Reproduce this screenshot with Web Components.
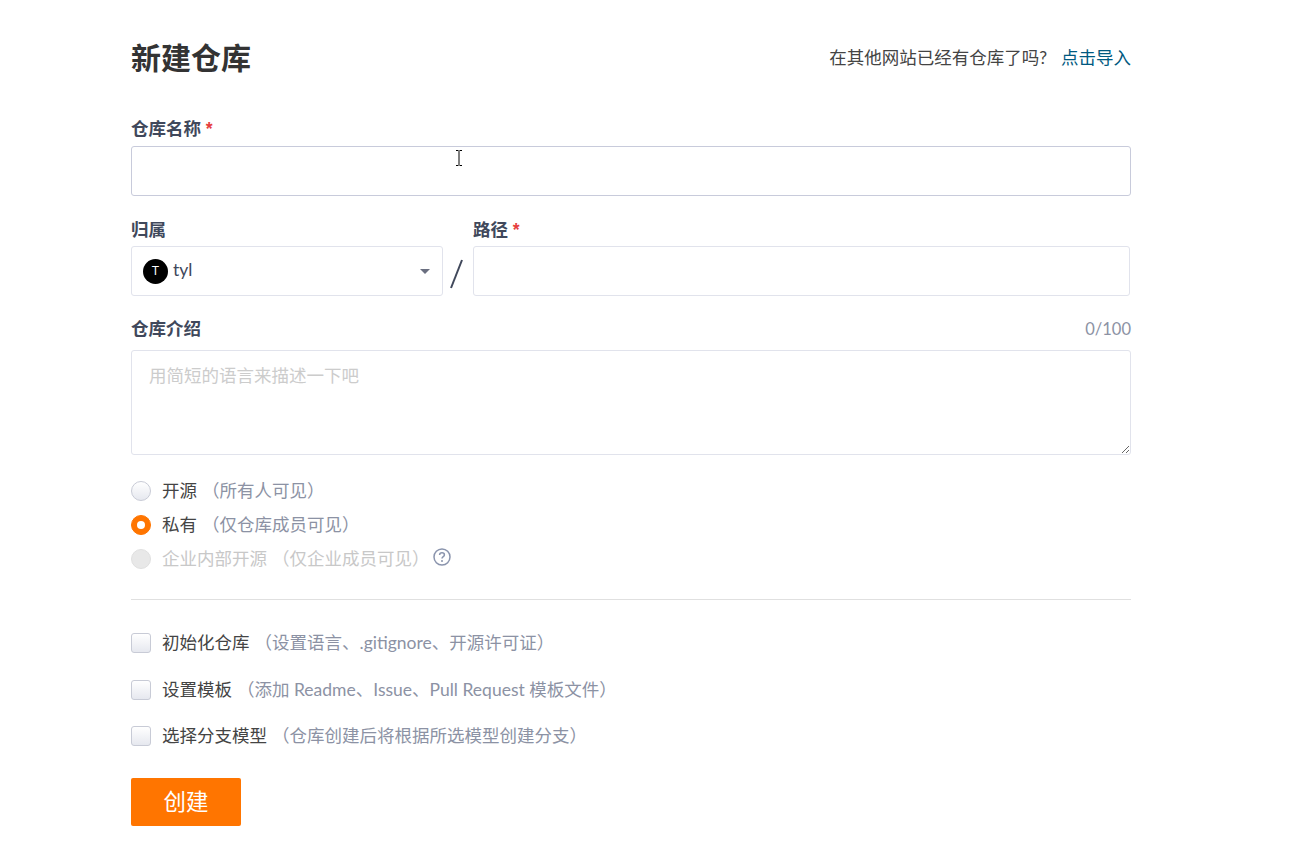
<!DOCTYPE html>
<html lang="zh">
<head>
<meta charset="utf-8">
<title>新建仓库</title>
<style>
    html, body { margin: 0; padding: 0; background: #fff; }
    body { font: 17.5px/24px Lato, "Noto Sans CJK SC", sans-serif; color: #40485b; }
    [slot="hint"] { white-space: pre; }
</style>
</head>
<body>

<repo-page>
    <repo-header></repo-header>

    <form-field label="仓库名称" required style="margin-top:39px"><text-box strong></text-box></form-field>

    <owner-row style="margin-top:22px"></owner-row>

    <desc-field style="margin-top:21px"></desc-field>

    <choice-list style="margin-top:19px" step="34">
        <choice-item type="radio">开源<span slot="hint">（所有人可见）</span></choice-item>
        <choice-item type="radio" checked>私有<span slot="hint">（仅仓库成员可见）</span></choice-item>
        <choice-item type="radio" disabled help>企业内部开源<span slot="hint">（仅企业成员可见）</span></choice-item>
    </choice-list>

    <form-divider></form-divider>

    <choice-list step="46.5">
        <choice-item type="check">初始化仓库<span slot="hint">（设置语言、.gitignore、开源许可证）</span></choice-item>
        <choice-item type="check">设置模板<span slot="hint">（添加 Readme、Issue、Pull Request 模板文件）</span></choice-item>
        <choice-item type="check">选择分支模型<span slot="hint">（仓库创建后将根据所选模型创建分支）</span></choice-item>
    </choice-list>

    <primary-button>创建</primary-button>

    <ibeam-cursor></ibeam-cursor>
</repo-page>

<script>
/**
 * small helper: makes an open shadow root from a html string
 */
function fillShadow(objElement, sHtml)
{
    objElement.attachShadow({mode: "open"}).innerHTML = sHtml;
}

class RepoPage extends HTMLElement
{
    constructor()
    {
        super();
        fillShadow(this, `
            <style>
                :host { display: block; position: relative; width: 1000px; height: 847px; margin-left: 131px; box-sizing: border-box; padding-top: 38px; }
            </style>
            <slot></slot>
        `);
    }
}

class RepoHeader extends HTMLElement
{
    constructor()
    {
        super();
        fillShadow(this, `
            <style>
                :host { display: flex; justify-content: space-between; align-items: center; height: 40px; }
                h1 { margin: -2px 0 0; font-size: 30px; line-height: 40px; font-weight: 700; color: #333; }
                .import { color: #444; white-space: pre; }
                a { color: #005980; text-decoration: none; margin-left: 14px; }
            </style>
            <h1>新建仓库</h1>
            <div class="import">在其他网站已经有仓库了吗?<a href="#">点击导入</a></div>
        `);
    }
}

class FormField extends HTMLElement
{
    constructor()
    {
        super();
        fillShadow(this, `
            <style>
                :host { display: block; }
                .label { height: 24px; line-height: 24px; margin-bottom: var(--label-gap, 5px); font-weight: 700; color: #40485b; }
                .star { color: #e63e3e; font-family: "Liberation Sans", sans-serif; }
            </style>
            <div class="label"></div>
            <slot></slot>
        `);
    }

    connectedCallback()
    {
        const objLabel = this.shadowRoot.querySelector(".label");
        objLabel.textContent = this.getAttribute("label");
        if (this.hasAttribute("required"))
        {
            const objStar = document.createElement("span");
            objStar.className = "star";
            objStar.textContent = " *";
            objLabel.appendChild(objStar);
        }
    }
}

class TextBox extends HTMLElement
{
    constructor()
    {
        super();
        fillShadow(this, `
            <style>
                :host { display: block; height: 50px; }
                input { display: block; box-sizing: border-box; width: 100%; height: 100%; border: 1px solid #e1e3ec; border-radius: 3px; outline: none; background: #fff; }
                :host([strong]) input { border-color: #c8cbdb; }
            </style>
            <input type="text">
        `);
    }
}

class OwnerSelect extends HTMLElement
{
    constructor()
    {
        super();
        fillShadow(this, `
            <style>
                :host { display: flex; align-items: center; box-sizing: border-box; height: 50px; padding-left: 11px; border: 1px solid #e1e3ec; border-radius: 3px; color: #40485b; }
                .avatar { width: 25px; height: 25px; border-radius: 50%; background: #000; color: #fff; font: 12px/25px "Liberation Sans", sans-serif; text-align: center; margin-right: 5px; flex: none; }
                .name { flex: 1; margin-top: -3px; }
                svg { margin-right: 12px; }
            </style>
            <span class="avatar">T</span>
            <span class="name">tyl</span>
            <svg width="10" height="5" viewBox="0 0 10 5"><path d="M0 0h10L5 5z" fill="#6a6f80"/></svg>
        `);
    }
}

class OwnerRow extends HTMLElement
{
    constructor()
    {
        super();
        fillShadow(this, `
            <style>
                :host { display: flex; align-items: flex-end; --label-gap: 4px; }
                .owner { width: 312px; flex: none; }
                .path { flex: 1; margin-right: 1px; }
                .slash { width: 30px; flex: none; height: 50px; display: flex; justify-content: center; align-items: center; }
                svg { margin: 6px 4px 0 0; }
            </style>
            <form-field class="owner" label="归属"><owner-select></owner-select></form-field>
            <div class="slash"><svg width="14" height="30" viewBox="0 0 14 30"><path d="M13 1 2 29" stroke="#40485b" stroke-width="2" fill="none"/></svg></div>
            <form-field class="path" label="路径" required><text-box></text-box></form-field>
        `);
    }
}

class DescField extends HTMLElement
{
    constructor()
    {
        super();
        fillShadow(this, `
            <style>
                :host { display: block; }
                .top { display: flex; justify-content: space-between; height: 24px; line-height: 24px; margin-bottom: 9px; }
                .label { font-weight: 700; color: #40485b; }
                .count { color: #8c92a4; font-size: 16.5px; }
                textarea { display: block; box-sizing: border-box; width: 100%; height: 105px; padding: 13px 17px; border: 1px solid #e1e3ec; border-radius: 3px; outline: none; font: inherit; color: inherit; }
                textarea::placeholder { color: #ccc; opacity: 1; }
            </style>
            <div class="top"><span class="label">仓库介绍</span><span class="count">0/100</span></div>
            <textarea placeholder="用简短的语言来描述一下吧"></textarea>
        `);
    }
}

class ChoiceList extends HTMLElement
{
    constructor()
    {
        super();
        fillShadow(this, `
            <style>
                :host { display: flex; flex-direction: column; }
                ::slotted(choice-item) { height: var(--step); }
            </style>
            <slot></slot>
        `);
    }

    connectedCallback()
    {
        this.style.setProperty("--step", this.getAttribute("step") + "px");
    }
}

class ChoiceItem extends HTMLElement
{
    constructor()
    {
        super();
        fillShadow(this, `
            <style>
                :host { display: flex; align-items: center; color: #444; white-space: nowrap; }
                .mark { box-sizing: border-box; width: 20px; height: 20px; margin-right: 11px; flex: none; border: 1px solid #c8cbd6; background: linear-gradient(#fff, #e6e8ef); display: flex; align-items: center; justify-content: center; }
                :host([type="radio"]) .mark { border-radius: 50%; }
                :host([type="check"]) .mark { border-radius: 3px; }
                :host([checked]) .mark { background: #ff7500; border-color: #ff7500; }
                :host([checked]) .mark::after { content: ""; width: 8px; height: 8px; border-radius: 50%; background: #fff; }
                :host([disabled]) .mark { background: #e8e8e8; border-color: #e0e0e0; }
                :host([disabled]) { color: #c8c8c8; }
                .hint { margin-left: 5px; color: #8c92a4; }
                :host([disabled]) .hint { color: #c8c8c8; }
                .help { display: none; margin: -5px 0 0 3px; }
                :host([help]) .help { display: block; }
            </style>
            <span class="mark"></span>
            <span><slot></slot></span>
            <span class="hint"><slot name="hint"></slot></span>
            <svg class="help" width="18" height="18" viewBox="0 0 18 18" fill="none">
                <circle cx="9" cy="9" r="8" stroke="#8a94ad" stroke-width="1.5"/>
                <path d="M6.6 7c0-1.4 1-2.2 2.4-2.2s2.4.9 2.4 2.1c0 1.800-2.400 1.700-2.400 3.600" stroke="#8a94ad" stroke-width="1.5"/>
                <circle cx="9" cy="13" r="1" fill="#8a94ad"/>
            </svg>
        `);
    }
}

class FormDivider extends HTMLElement
{
    constructor()
    {
        super();
        fillShadow(this, `
            <style>
                :host { display: block; height: 1px; margin: 23px 0 20px; background: #e0e0e0; }
            </style>
        `);
    }
}

class PrimaryButton extends HTMLElement
{
    constructor()
    {
        super();
        fillShadow(this, `
            <style>
                :host { display: block; width: 110px; height: 48px; margin-top: 18px; border-radius: 2px; background: #ff7500; color: #fff; font-size: 22.5px; line-height: 48px; text-align: center; }
            </style>
            <slot></slot>
        `);
    }
}

/* the mouse pointer that was caught in the screenshot */
class IbeamCursor extends HTMLElement
{
    constructor()
    {
        super();
        fillShadow(this, `
            <style>
                :host { position: absolute; left: 324px; top: 150px; width: 8px; height: 16px; }
                svg { display: block; }
            </style>
            <svg width="8" height="16" viewBox="0 0 8 16"><path d="M1 .5h2.500M4.500 .5H7M4 1v14M1 15.500h2.500M4.500 15.500H7" stroke="#000" fill="none"/></svg>
        `);
    }
}

customElements.define("repo-page", RepoPage);
customElements.define("repo-header", RepoHeader);
customElements.define("form-field", FormField);
customElements.define("text-box", TextBox);
customElements.define("owner-select", OwnerSelect);
customElements.define("owner-row", OwnerRow);
customElements.define("desc-field", DescField);
customElements.define("choice-list", ChoiceList);
customElements.define("choice-item", ChoiceItem);
customElements.define("form-divider", FormDivider);
customElements.define("primary-button", PrimaryButton);
customElements.define("ibeam-cursor", IbeamCursor);
</script>
</body>
</html>
